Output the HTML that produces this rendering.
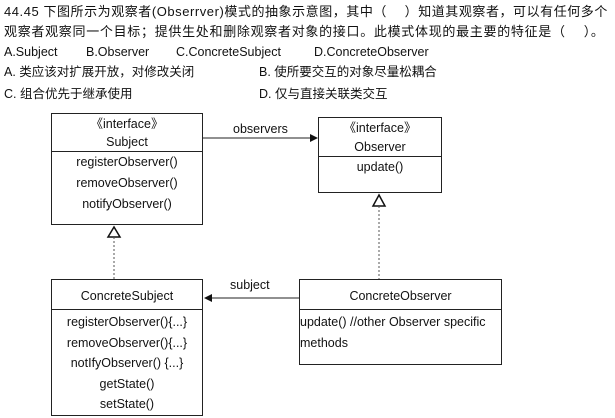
<!DOCTYPE html>
<html><head><meta charset="utf-8"><style>
body{margin:0;width:615px;height:418px;background:#fff;position:relative;overflow:hidden;font-family:"Liberation Sans","Noto Sans CJK SC",sans-serif;color:#111}
.t{position:absolute;white-space:nowrap;font-size:12.5px;line-height:16px}
.b{position:absolute;border:1.5px solid #222;box-sizing:border-box;background:#fff}
.r{position:absolute;left:0;right:0;text-align:center;font-size:12.5px;line-height:16px}
.hl{position:absolute;left:0;right:0;border-top:1.5px solid #222}
</style></head><body>
<div class="t" style="left:4px;top:4px;font-size:13px;letter-spacing:0.55px">44.45 下图所示为观察者(Obserrver)模式的抽象示意图，其中（　 ）知道其观察者，可以有任何多个</div>
<div class="t" style="left:4px;top:24px;font-size:13px;letter-spacing:0.7px">观察者观察同一个目标；提供生处和删除观察者对象的接口。此模式体现的最主要的特征是（　 ）。</div>
<div class="t" style="left:4px;top:44px">A.Subject</div>
<div class="t" style="left:86px;top:44px">B.Observer</div>
<div class="t" style="left:176px;top:44px">C.ConcreteSubject</div>
<div class="t" style="left:314px;top:44px">D.ConcreteObserver</div>
<div class="t" style="left:4px;top:64px">A. 类应该对扩展开放，对修改关闭</div>
<div class="t" style="left:259px;top:64px">B. 使所要交互的对象尽量松耦合</div>
<div class="t" style="left:4px;top:86px">C. 组合优先于继承使用</div>
<div class="t" style="left:259px;top:86px">D. 仅与直接关联类交互</div>

<svg style="position:absolute;left:0;top:0" width="615" height="418">
<line x1="203" y1="138" x2="312" y2="138" stroke="#222" stroke-width="1"/>
<polygon points="318,138 310,134 310,142" fill="#111"/>
<line x1="299" y1="298" x2="211" y2="298" stroke="#222" stroke-width="1"/>
<polygon points="204,298 212,294 212,302" fill="#111"/>
<polygon points="114,227 108,237 120,237" fill="#fff" stroke="#111" stroke-width="1.5"/>
<line x1="114" y1="237" x2="114" y2="279" stroke="#555" stroke-dasharray="2,2"/>
<polygon points="379,195 373,206 385,206" fill="#fff" stroke="#111" stroke-width="1.5"/>
<line x1="379" y1="206" x2="379" y2="279" stroke="#555" stroke-dasharray="2,2"/>
</svg>
<div class="t" style="left:233px;top:121px;font-size:12.5px">observers</div>
<div class="t" style="left:230px;top:277px;font-size:12.5px">subject</div>

<div class="b" style="left:51px;top:113px;width:152px;height:112px">
<div class="r" style="top:2px">《interface》</div>
<div class="r" style="top:20px">Subject</div>
<div class="hl" style="top:37px"></div>
<div class="r" style="top:40px">registerObserver()</div>
<div class="r" style="top:61px">removeObserver()</div>
<div class="r" style="top:82px">notifyObserver()</div>
</div>
<div class="b" style="left:318px;top:117px;width:124px;height:76px">
<div class="r" style="top:2px">《interface》</div>
<div class="r" style="top:21px">Observer</div>
<div class="hl" style="top:38px"></div>
<div class="r" style="top:41px">update()</div>
</div>
<div class="b" style="left:51px;top:279px;width:152px;height:137px">
<div class="r" style="top:8px">ConcreteSubject</div>
<div class="hl" style="top:29px"></div>
<div class="r" style="top:34px">registerObserver(){...}</div>
<div class="r" style="top:55px">removeObserver(){...}</div>
<div class="r" style="top:75px">notIfyObserver() {...}</div>
<div class="r" style="top:96px">getState()</div>
<div class="r" style="top:116px">setState()</div>
</div>
<div class="b" style="left:299px;top:279px;width:203px;height:86px">
<div class="r" style="top:8px">ConcreteObserver</div>
<div class="hl" style="top:29px"></div>
<div class="r" style="top:34px;text-align:left">update() //other Observer specific</div>
<div class="r" style="top:55px;text-align:left">methods</div>
</div>
</body></html>
